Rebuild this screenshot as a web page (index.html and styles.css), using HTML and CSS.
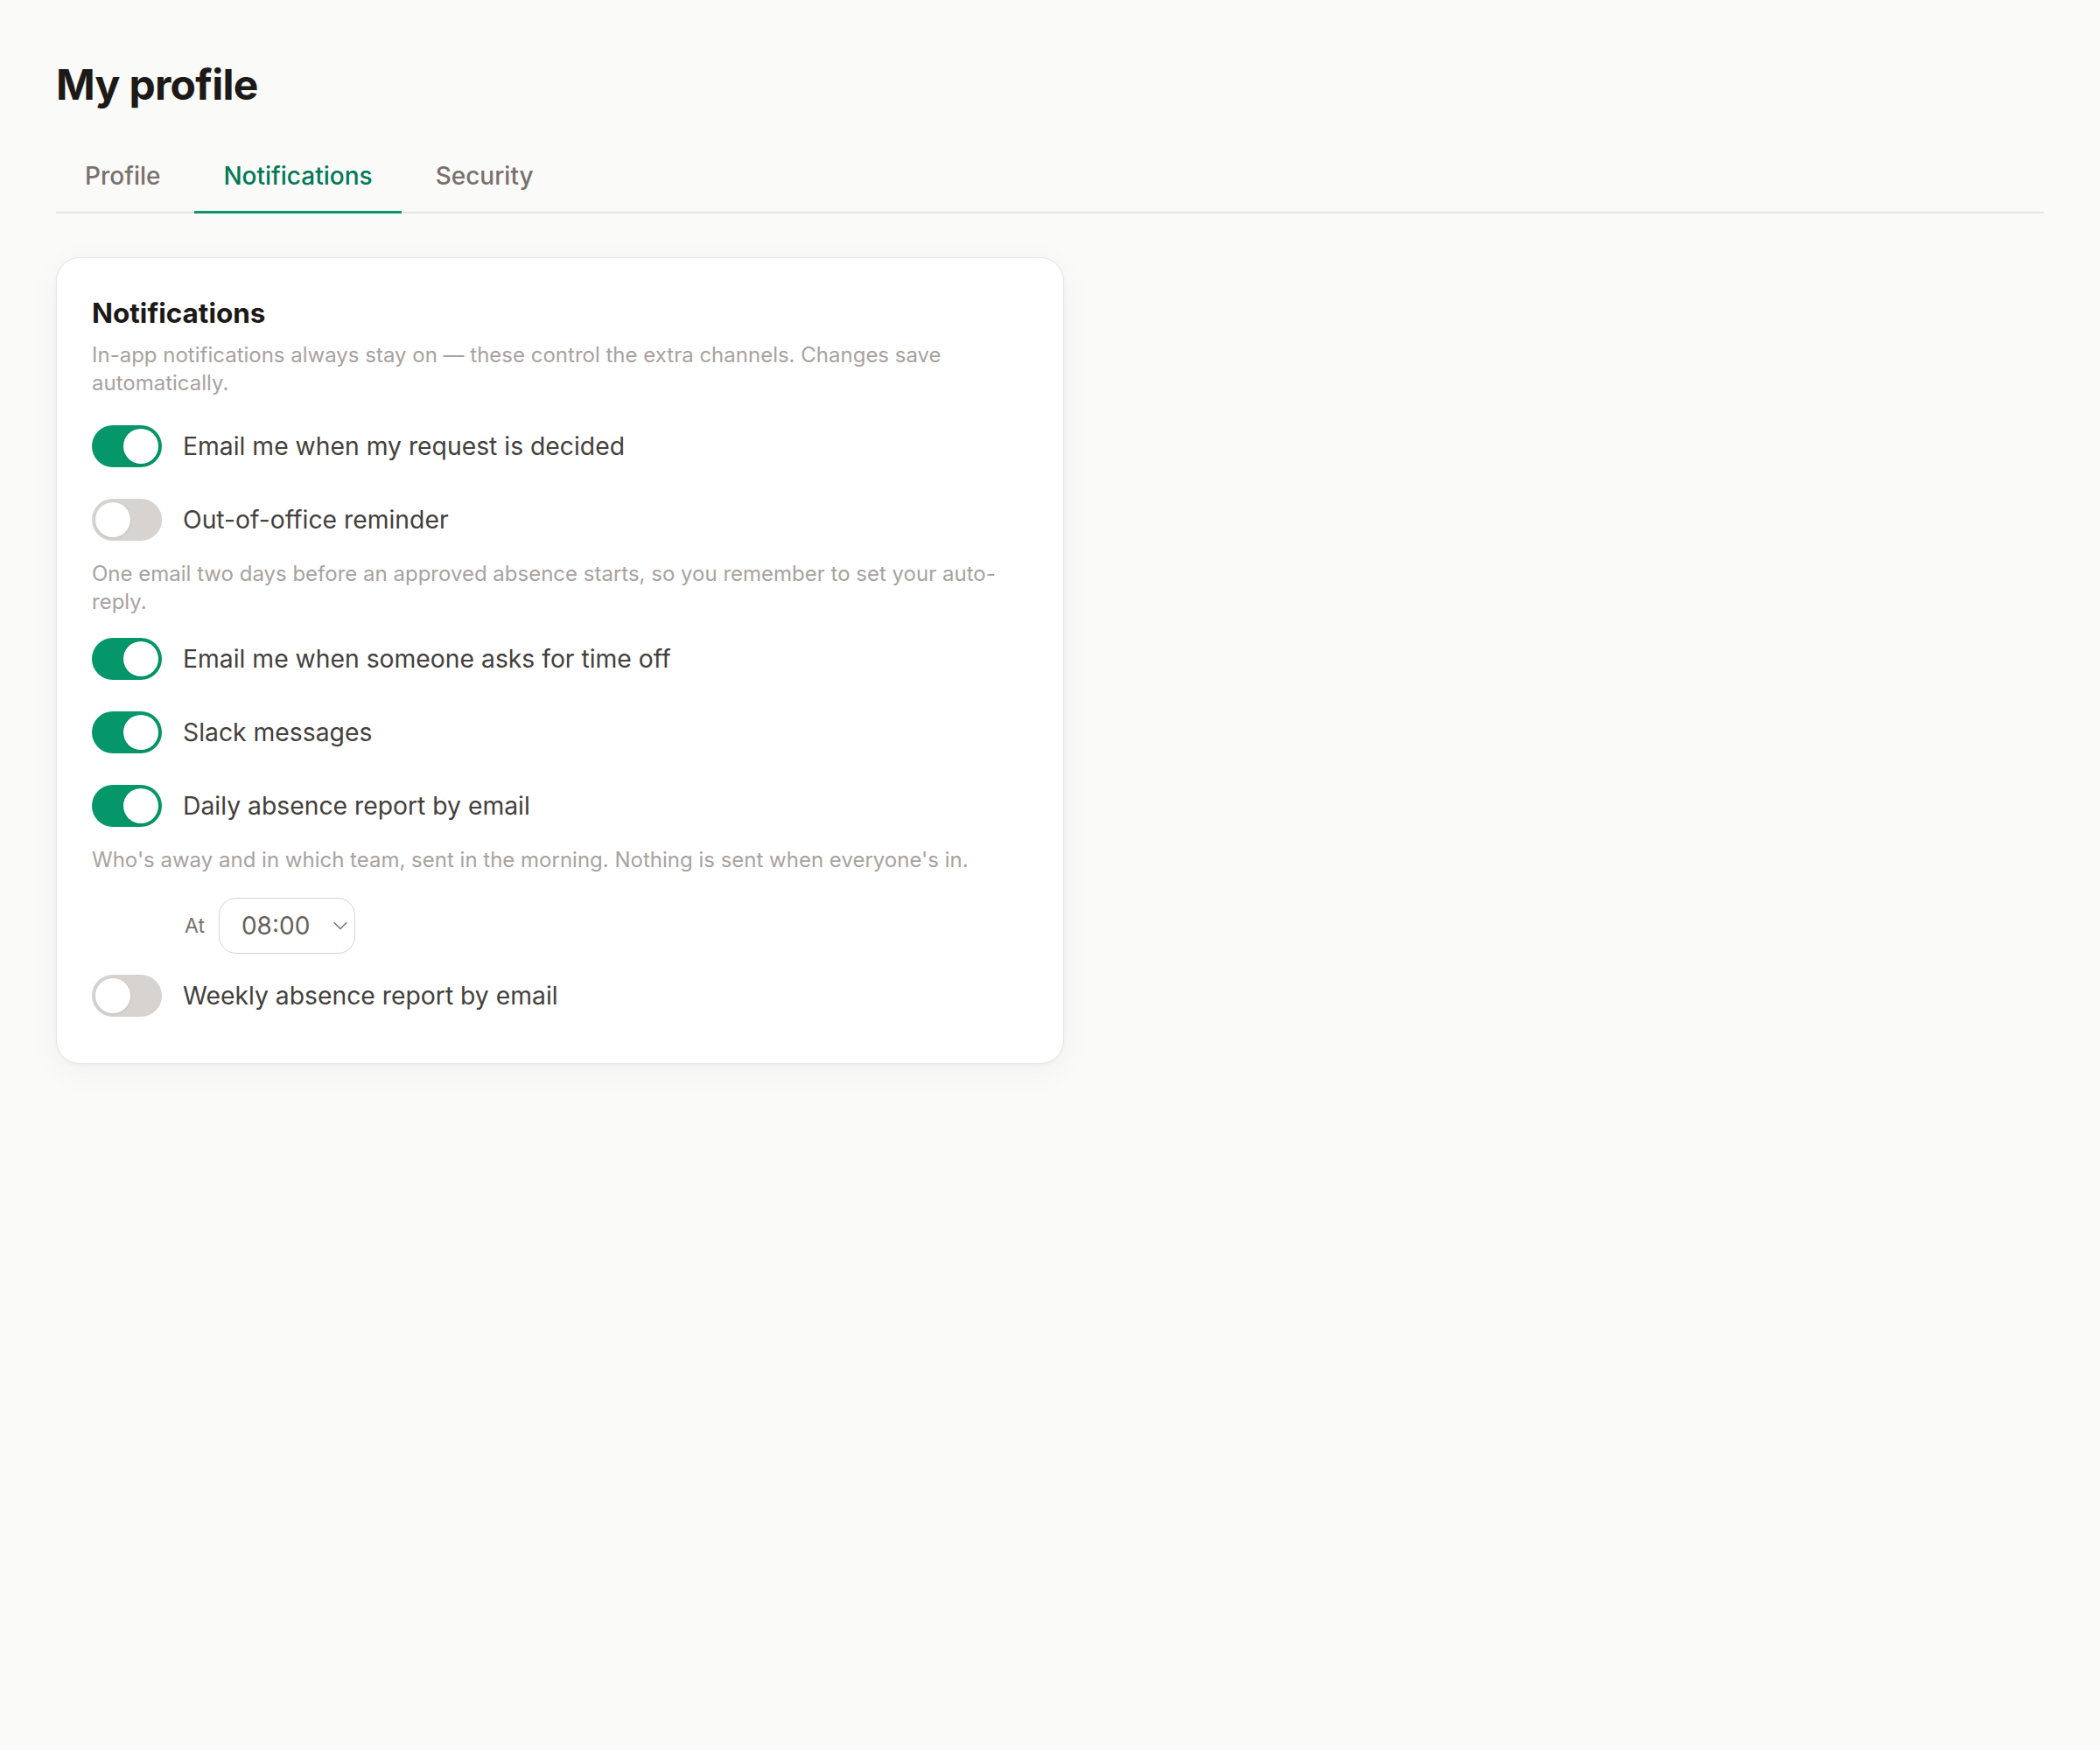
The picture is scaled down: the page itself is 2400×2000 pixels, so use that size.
FILE: index.html
```html
<!DOCTYPE html>
<html lang="en">
<head>
  <meta charset="UTF-8" />
  <meta name="viewport" content="width=device-width, initial-scale=1.0" />
  <title>My profile</title>
  <link rel="stylesheet" href="styles.css">
</head>
<body>
  <main class="page">
    <h1 class="page-title">My profile</h1>

    <nav class="tabs">
      <button class="tab">Profile</button>
      <button class="tab active">Notifications</button>
      <button class="tab">Security</button>
    </nav>

    <section class="card">
      <h2 class="card-title">Notifications</h2>
      <p class="card-desc">In-app notifications always stay on — these control the extra channels. Changes save automatically.</p>

      <div class="settings">
        <label class="toggle-row">
          <span class="switch on"></span>
          <span class="toggle-label">Email me when my request is decided</span>
        </label>

        <label class="toggle-row">
          <span class="switch"></span>
          <span class="toggle-label">Out-of-office reminder</span>
        </label>
        <p class="hint">One email two days before an approved absence starts, so you remember to set your auto-reply.</p>

        <label class="toggle-row">
          <span class="switch on"></span>
          <span class="toggle-label">Email me when someone asks for time off</span>
        </label>

        <label class="toggle-row">
          <span class="switch on"></span>
          <span class="toggle-label">Slack messages</span>
        </label>

        <label class="toggle-row">
          <span class="switch on"></span>
          <span class="toggle-label">Daily absence report by email</span>
        </label>
        <p class="hint">Who's away and in which team, sent in the morning. Nothing is sent when everyone's in.</p>

        <div class="time-row">
          <span class="time-label">At</span>
          <div class="time-select">
            <select>
              <option>08:00</option>
            </select>
            <svg width="16" height="10" viewBox="0 0 16 10" fill="none">
              <path d="M1 1.5 L8 8.5 L15 1.5" stroke="#78716c" stroke-width="1.5" stroke-linecap="round" stroke-linejoin="round"/>
            </svg>
          </div>
        </div>

        <label class="toggle-row">
          <span class="switch"></span>
          <span class="toggle-label">Weekly absence report by email</span>
        </label>
      </div>
    </section>
  </main>
</body>
</html>
```

FILE: styles.css
```css
/* General */
body {
  margin: 0;
  background: #fafaf9;
  font-family: Inter, "Noto Sans", sans-serif;
  color: #1c1917;
}

.page {
  padding: 67.5px 64px 66px;
}

.page-title {
  margin: 0 0 38px;
  font-size: 48px;
  line-height: 1.2;
  font-weight: 700;
  letter-spacing: -0.7px;
  color: #1c1917;
}

/* Tabs */
.tabs {
  display: flex;
  gap: 6px;
  border-bottom: 2px solid #e7e5e4;
}

.tab {
  font-family: inherit;
  font-size: 28px;
  font-weight: 500;
  line-height: 40px;
  padding: 18px 33px 20px;
  margin-bottom: -2px;
  border: none;
  border-bottom: 3px solid transparent;
  background: none;
  color: #78716c;
  cursor: pointer;
}

.tab.active {
  color: #047857;
  border-bottom-color: #059669;
}

/* Card */
.card {
  box-sizing: border-box;
  width: 1152px;
  margin-top: 50px;
  padding: 40px 40px 44px;
  background: #fff;
  border: 1.5px solid #e7e5e4;
  border-radius: 27px;
  box-shadow: 0 2px 4px rgba(28, 25, 23, 0.03), 0 8px 40px rgba(28, 25, 23, 0.04);
}

.card-title {
  margin: 0;
  font-size: 31.5px;
  line-height: 46px;
  font-weight: 700;
  color: #1c1917;
}

.card-desc {
  margin: 9px 0 23px;
  font-size: 24px;
  line-height: 32px;
  color: #a8a29e;
}

/* Settings list */
.settings {
  display: flex;
  flex-direction: column;
  gap: 18px;
}

.toggle-row {
  display: flex;
  align-items: center;
  gap: 24px;
  padding: 9px 0;
  font-size: 28.3px;
  color: #44403c;
  cursor: pointer;
}

.switch {
  position: relative;
  flex: none;
  width: 80px;
  height: 48px;
  border-radius: 24px;
  background: #d6d3d1;
}

.switch::after {
  content: "";
  position: absolute;
  top: 4px;
  left: 4px;
  width: 40px;
  height: 40px;
  border-radius: 50%;
  background: #fff;
  box-shadow: 0 1px 3px rgba(0, 0, 0, 0.1);
}

.switch.on {
  background: #059669;
}

.switch.on::after {
  left: 36px;
}

.hint {
  margin: -5px 0 -2px;
  font-size: 24px;
  line-height: 32px;
  color: #a8a29e;
}

/* Time picker */
.time-row {
  display: flex;
  align-items: center;
  gap: 16px;
  padding: 11px 0 0 106px;
  margin-bottom: -3px;
}

.time-label {
  font-size: 23px;
  color: #78716c;
}

.time-select {
  position: relative;
}

.time-select select {
  appearance: none;
  width: 156px;
  height: 64px;
  padding: 0 0 0 25px;
  font-family: inherit;
  font-size: 28px;
  color: #66605b;
  background: #fff;
  border: 1.5px solid #d6d3d1;
  border-radius: 20px;
}

.time-select svg {
  position: absolute;
  right: 9px;
  top: 50%;
  transform: translateY(-50%);
  pointer-events: none;
}
```
